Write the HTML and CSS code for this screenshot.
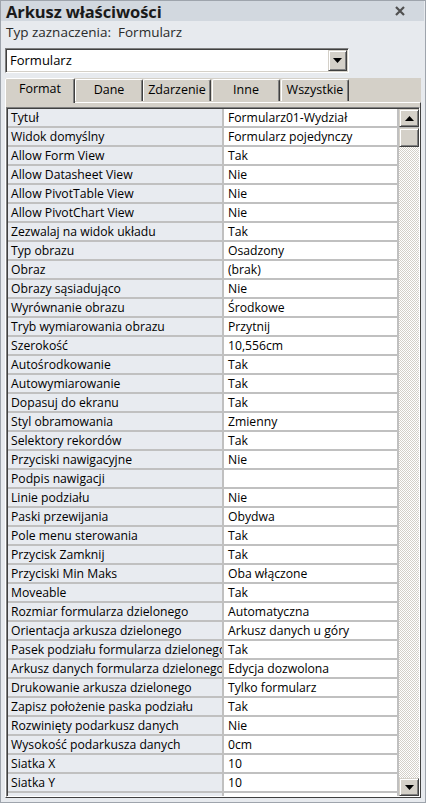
FILE: index.html
```html
<!DOCTYPE html>
<html lang="pl">
<head>
<meta charset="utf-8">
<title>Arkusz właściwości</title>
<link rel="stylesheet" href="styles.css">
</head>
<body>
<div class="window">
  <div class="titlebar">
    <span class="title">Arkusz właściwości</span>
    <span class="close"><svg width="10" height="10" viewBox="0 0 10 10"><path d="M1 1 L9 9 M9 1 L1 9" stroke="#505050" stroke-width="2.2" fill="none"/></svg></span>
  </div>
  <div class="seltype">Typ zaznaczenia:&nbsp; Formularz</div>
  <div class="combo">
    <span class="combo-text">Formularz</span>
    <span class="combo-btn"><svg width="9" height="5" viewBox="0 0 9 5"><path d="M0 0 H9 L4.5 5 Z" fill="#000"/></svg></span>
  </div>
  <div class="tabs">
    <div class="tab tab-active tab-format">Format</div>
    <div class="tab tab-dane">Dane</div>
    <div class="tab tab-zd">Zdarzenie</div>
    <div class="tab tab-inne">Inne</div>
    <div class="tab tab-wsz">Wszystkie</div>
  </div>
  <div class="panel">
    <div class="frame">
      <div class="rows">
        <div class="row"><div class="lab">Tytuł</div><div class="val">Formularz01-Wydział</div></div>
        <div class="row"><div class="lab">Widok domyślny</div><div class="val">Formularz pojedynczy</div></div>
        <div class="row"><div class="lab">Allow Form View</div><div class="val">Tak</div></div>
        <div class="row"><div class="lab">Allow Datasheet View</div><div class="val">Nie</div></div>
        <div class="row"><div class="lab">Allow PivotTable View</div><div class="val">Nie</div></div>
        <div class="row"><div class="lab">Allow PivotChart View</div><div class="val">Nie</div></div>
        <div class="row"><div class="lab">Zezwalaj na widok układu</div><div class="val">Tak</div></div>
        <div class="row"><div class="lab">Typ obrazu</div><div class="val">Osadzony</div></div>
        <div class="row"><div class="lab">Obraz</div><div class="val">(brak)</div></div>
        <div class="row"><div class="lab">Obrazy sąsiadująco</div><div class="val">Nie</div></div>
        <div class="row"><div class="lab">Wyrównanie obrazu</div><div class="val">Środkowe</div></div>
        <div class="row"><div class="lab">Tryb wymiarowania obrazu</div><div class="val">Przytnij</div></div>
        <div class="row"><div class="lab">Szerokość</div><div class="val">10,556cm</div></div>
        <div class="row"><div class="lab">Autośrodkowanie</div><div class="val">Tak</div></div>
        <div class="row"><div class="lab">Autowymiarowanie</div><div class="val">Tak</div></div>
        <div class="row"><div class="lab">Dopasuj do ekranu</div><div class="val">Tak</div></div>
        <div class="row"><div class="lab">Styl obramowania</div><div class="val">Zmienny</div></div>
        <div class="row"><div class="lab">Selektory rekordów</div><div class="val">Tak</div></div>
        <div class="row"><div class="lab">Przyciski nawigacyjne</div><div class="val">Nie</div></div>
        <div class="row"><div class="lab">Podpis nawigacji</div><div class="val"></div></div>
        <div class="row"><div class="lab">Linie podziału</div><div class="val">Nie</div></div>
        <div class="row"><div class="lab">Paski przewijania</div><div class="val">Obydwa</div></div>
        <div class="row"><div class="lab">Pole menu sterowania</div><div class="val">Tak</div></div>
        <div class="row"><div class="lab">Przycisk Zamknij</div><div class="val">Tak</div></div>
        <div class="row"><div class="lab">Przyciski Min Maks</div><div class="val">Oba włączone</div></div>
        <div class="row"><div class="lab">Moveable</div><div class="val">Tak</div></div>
        <div class="row"><div class="lab">Rozmiar formularza dzielonego</div><div class="val">Automatyczna</div></div>
        <div class="row"><div class="lab">Orientacja arkusza dzielonego</div><div class="val">Arkusz danych u góry</div></div>
        <div class="row"><div class="lab">Pasek podziału formularza dzielonego</div><div class="val">Tak</div></div>
        <div class="row"><div class="lab">Arkusz danych formularza dzielonego</div><div class="val">Edycja dozwolona</div></div>
        <div class="row"><div class="lab">Drukowanie arkusza dzielonego</div><div class="val">Tylko formularz</div></div>
        <div class="row"><div class="lab">Zapisz położenie paska podziału</div><div class="val">Tak</div></div>
        <div class="row"><div class="lab">Rozwinięty podarkusz danych</div><div class="val">Nie</div></div>
        <div class="row"><div class="lab">Wysokość podarkusza danych</div><div class="val">0cm</div></div>
        <div class="row"><div class="lab">Siatka X</div><div class="val">10</div></div>
        <div class="row"><div class="lab">Siatka Y</div><div class="val">10</div></div>
        <div class="row"><div class="lab"></div><div class="val"></div></div>
      </div>
      <div class="scrollbar">
        <div class="sbtn"><svg width="9" height="5" viewBox="0 0 9 5"><path d="M4.5 0 L9 5 H0 Z" fill="#000"/></svg></div>
        <div class="sthumb"></div>
        <div class="strack"></div>
        <div class="sbtn"><svg width="9" height="5" viewBox="0 0 9 5"><path d="M0 0 H9 L4.5 5 Z" fill="#000"/></svg></div>
      </div>
    </div>
  </div>
</div>
</body>
</html>
```
FILE: styles.css
```css
* { box-sizing: border-box; }
html, body { margin: 0; padding: 0; }
body {
  font-family: "Open Sans", "Noto Sans", sans-serif;
  font-size: 12.2px;
  color: #000;
  background: #e7eaee;
}
.window {
  width: 426px;
  height: 803px;
  border: 1px solid #9ea4ac;
  background: #e7eaee;
  display: flex;
  flex-direction: column;
  overflow: hidden;
}
.titlebar {
  height: 20px;
  background: #d2d8df;
  display: flex;
  align-items: center;
  justify-content: space-between;
  padding: 0 19px 0 5px;
  margin-right: 1px;
}
.title {
  font-weight: bold;
  font-size: 16.5px;
  color: #1a1a1a;
  letter-spacing: -0.1px;
  line-height: 20px;
  padding-top: 1px;
}
.close { display: flex; align-items: center; }
.seltype {
  height: 22px;
  line-height: 22px;
  padding-left: 5px;
  font-size: 13.5px;
  color: #2a2a2a;
}
.combo {
  margin: 5px 0 0 4px;
  width: 344px;
  height: 25px;
  background: #fff;
  border-top: 1px solid #808080;
  border-left: 1px solid #808080;
  border-right: 1px solid #fff;
  border-bottom: 1px solid #fff;
  box-shadow: inset 1px 1px 0 #404040, inset -1px -1px 0 #d4d0c8;
  display: flex;
  align-items: stretch;
  justify-content: space-between;
  padding: 1px;
}
.combo-text {
  padding-left: 3px;
  line-height: 21px;
  font-size: 13px;
}
.combo-btn {
  width: 19px;
  background: #d4d0c8;
  border-top: 1px solid #d4d0c8;
  border-left: 1px solid #d4d0c8;
  border-right: 1px solid #404040;
  border-bottom: 1px solid #404040;
  box-shadow: inset 1px 1px 0 #fff, inset -1px -1px 0 #808080;
  display: flex;
  align-items: center;
  justify-content: center;
}
.tabs {
  margin: 5px 0 0 4px;
  width: 416px;
  height: 24px;
  background: #d4d0c8;
  display: flex;
  align-items: flex-end;
  position: relative;
  z-index: 2;
}
.tab {
  height: 22px;
  width: 68px;
  margin-bottom: 1px;
  border-top: 1px solid #fff;
  border-left: 1px solid #fff;
  border-right: 1px solid #404040;
  box-shadow: inset -1px 0 0 #808080;
  border-radius: 2px 2px 0 0;
  background: #d4d0c8;
  text-align: center;
  line-height: 20px;
  font-size: 12.5px;
}
.tab-active {
  height: 25px;
  width: 70px;
  margin-bottom: -1px;
  line-height: 20px;
}
.tab-inne { margin-left: 1px; }
.tab-wsz { margin-left: 1px; }
.panel {
  margin-left: 4px;
  width: 416px;
  height: 696px;
  background: #d4d0c8;
  border-top: 1px solid #fff;
  border-left: 1px solid #fff;
  border-right: 1px solid #404040;
  border-bottom: 1px solid #404040;
  padding-top: 4px;
}
.frame {
  height: 690px;
  border-top: 1px solid #808080;
  border-left: 1px solid #808080;
  border-right: 1px solid #fff;
  border-bottom: 1px solid #fff;
  box-shadow: inset 1px 1px 0 #404040;
  padding: 1px 0 0 1px;
  background: #c0c0c0;
  display: flex;
  gap: 2px;
}
.rows {
  width: 389px;
  height: 687px;
  overflow: hidden;
  display: flex;
  flex-direction: column;
  gap: 2px;
}
.row {
  display: flex;
  gap: 2px;
  height: 17px;
  flex: none;
}
.lab, .val {
  height: 17px;
  line-height: 17px;
  white-space: nowrap;
  overflow: hidden;
  padding-left: 3px;
}
.lab { width: 214px; background: #e8ebf0; }
.val { width: 173px; background: #fff; padding-left: 4px; }
.scrollbar {
  width: 20px;
  height: 687px;
  display: flex;
  flex-direction: column;
}
.sbtn, .sthumb {
  flex: none;
  height: 18px;
  background: #d4d0c8;
  border-top: 1px solid #d4d0c8;
  border-left: 1px solid #d4d0c8;
  border-right: 1px solid #404040;
  border-bottom: 1px solid #404040;
  box-shadow: inset 1px 1px 0 #fff, inset -1px -1px 0 #808080;
  display: flex;
  align-items: center;
  justify-content: center;
}
.sthumb { height: 19px; margin-top: 1px; }
.strack {
  flex: 1;
  background: repeating-conic-gradient(#ffffff 0 25%, #d4d0c8 0 50%) 0 0 / 2px 2px;
}
```
